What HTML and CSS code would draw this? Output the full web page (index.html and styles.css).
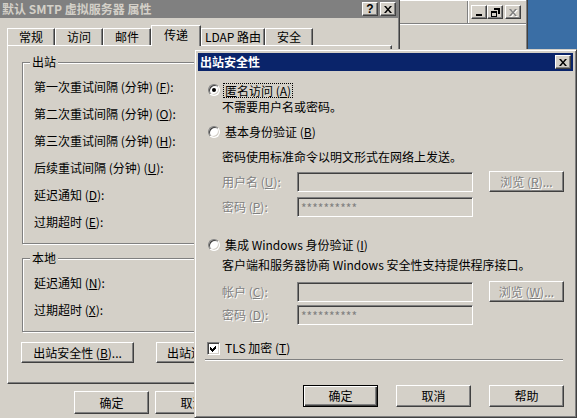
FILE: index.html
```html
<!DOCTYPE html>
<html lang="zh-CN">
<head>
  <meta charset="UTF-8">
  <title>出站安全性</title>
  <link rel="stylesheet" href="styles.css">
</head>
<body>
  <div class="screen">
    <div class="props">
      <div class="caption">
        <span class="caption-text">默认 SMTP 虚拟服务器 属性</span>
        <span class="cap-btns">
          <span class="cap-btn help">?</span>
          <span class="cap-btn">
            <svg width="8" height="7" viewBox="0 0 8 7"><path d="M0 0h2l2 2.5L6 0h2L5 3.5 8 7H6L4 4.5 2 7H0l3-3.5z"/></svg>
          </span>
        </span>
      </div>
      <div class="props-body">
        <div class="tabs">
          <span class="tab w48">常规</span>
          <span class="tab w48">访问</span>
          <span class="tab w48">邮件</span>
          <span class="tab active">传递</span>
          <span class="tab w64">LDAP 路由</span>
          <span class="tab w48">安全</span>
        </div>
        <div class="panel">
          <div class="group">
            <div class="group-title">出站</div>
            <div class="row">第一次重试间隔 (分钟) (<u>F</u>):</div>
            <div class="row">第二次重试间隔 (分钟) (<u>O</u>):</div>
            <div class="row">第三次重试间隔 (分钟) (<u>H</u>):</div>
            <div class="row">后续重试间隔 (分钟) (<u>U</u>):</div>
            <div class="row">延迟通知 (<u>D</u>):</div>
            <div class="row">过期超时 (<u>E</u>):</div>
          </div>
          <div class="group second">
            <div class="group-title">本地</div>
            <div class="row">延迟通知 (<u>N</u>):</div>
            <div class="row">过期超时 (<u>X</u>):</div>
          </div>
          <div class="panel-buttons">
            <span class="btn wide">出站安全性 (<u>B</u>)...</span>
            <!-- mostly hidden under the modal: only the start of the label shows -->
            <span class="btn wide peek">出站连接</span>
          </div>
        </div>
        <div class="sheet-buttons">
          <span class="btn">确定</span>
          <span class="btn">取消</span>
        </div>
      </div>
    </div>

    <div class="mmc">
      <div class="mmc-bar">
        <div class="mmc-menu"></div>
        <div class="mmc-btns">
          <span class="cap-btn">
            <svg width="8" height="7" viewBox="0 0 8 7"><rect x="1" y="5" width="6" height="2"/></svg>
          </span>
          <span class="cap-btn">
            <svg width="9" height="9" viewBox="0 0 9 9" shape-rendering="crispEdges"><path d="M3 0h6v6H7V2H3z M0 3h6v6H0z M1 5h4v3H1z" fill-rule="evenodd"/></svg>
          </span>
          <span class="cap-btn gap">
            <svg width="8" height="7" viewBox="0 0 8 7" class="dim"><path d="M0 0h2l2 2.5L6 0h2L5 3.5 8 7H6L4 4.5 2 7H0l3-3.5z"/></svg>
          </span>
        </div>
      </div>
    </div>

    <div class="desktop"></div>

    <div class="modal">
      <div class="m-caption">
        <span>出站安全性</span>
        <span class="cap-btn close">
          <svg width="8" height="7" viewBox="0 0 8 7"><path d="M0 0h2l2 2.5L6 0h2L5 3.5 8 7H6L4 4.5 2 7H0l3-3.5z"/></svg>
        </span>
      </div>
      <div class="m-body">
        <div class="opt opt1"><span class="radio on"></span><span class="focus">匿名访问 (<u>A</u>)</span></div>
        <div class="desc d1">不需要用户名或密码。</div>

        <div class="opt opt2"><span class="radio"></span><span class="opt-text">基本身份验证 (<u>B</u>)</span></div>
        <div class="desc d2">密码使用标准命令以明文形式在网络上发送。</div>
        <div class="field r1">
          <span class="field-label">用户名 (<u>U</u>):</span>
          <span class="edit"></span>
          <span class="btn disabled browse">浏览 (<u>R</u>)...</span>
        </div>
        <div class="field r2">
          <span class="field-label">密码 (<u>P</u>):</span>
          <span class="edit">**********</span>
        </div>

        <div class="opt opt3"><span class="radio"></span><span class="opt-text">集成 Windows 身份验证 (<u>I</u>)</span></div>
        <div class="desc d3">客户端和服务器协商 Windows 安全性支持提供程序接口。</div>
        <div class="field r3">
          <span class="field-label">帐户 (<u>C</u>):</span>
          <span class="edit"></span>
          <span class="btn disabled browse">浏览 (<u>W</u>)...</span>
        </div>
        <div class="field r4">
          <span class="field-label">密码 (<u>D</u>):</span>
          <span class="edit">**********</span>
        </div>

        <div class="opt tls">
          <span class="check">
            <svg width="7" height="7" viewBox="0 0 7 7" shape-rendering="crispEdges"><path d="M0 2l2 2 4-4v3L2 7 0 5z"/></svg>
          </span>
          <span class="opt-text">TLS 加密 (<u>T</u>)</span>
        </div>
        <div class="sep"></div>

        <div class="m-buttons">
          <span class="btn default">确定</span>
          <span class="btn">取消</span>
          <span class="btn">帮助</span>
        </div>
      </div>
    </div>
  </div>
</body>
</html>
```

FILE: styles.css
```css
body {
  margin: 0;
  background: #d4d0c8;
  font-family: "Noto Sans CJK SC", "Noto Sans", sans-serif;
  font-size: 12px;
  line-height: 14px;
  color: #000;
  overflow: hidden;
}
u {
  text-decoration: underline;
  text-underline-offset: 1px;
}
.screen {
  position: relative;
  width: 577px;
  height: 418px;
  display: flex;
  align-items: flex-start;
}

/* classic 3d bits */
.cap-btn {
  width: 16px;
  height: 14px;
  box-sizing: border-box;
  border: 1px solid;
  border-color: #fff #404040 #404040 #fff;
  box-shadow: inset -1px -1px #808080;
  background: #d4d0c8;
  display: flex;
  align-items: center;
  justify-content: center;
  color: #000;
}
.cap-btn svg {
  fill: #000;
}
.cap-btn .dim {
  fill: #808080;
  filter: drop-shadow(1px 1px 0 #fff);
}
.cap-btn.help {
  font-family: "Liberation Sans", sans-serif;
  font-weight: bold;
  font-size: 12px;
  line-height: 12px;
}
.btn {
  width: 75px;
  height: 23px;
  box-sizing: border-box;
  border: 1px solid;
  border-color: #fff #404040 #404040 #fff;
  box-shadow: inset -1px -1px #808080;
  background: #d4d0c8;
  display: flex;
  align-items: center;
  justify-content: center;
  white-space: nowrap;
  flex: none;
}
.btn.disabled {
  color: #808080;
  text-shadow: 1px 1px 0 #fff;
}
.btn.default {
  border-color: #000;
  box-shadow: inset 1px 1px #fff, inset -1px -1px #404040, inset -2px -2px #808080;
}

/* background property sheet */
.props {
  width: 400px;
  height: 418px;
  flex: none;
  box-sizing: border-box;
  border-right: 1px solid #404040;
  padding-right: 1px;
  box-shadow: inset -1px 0 #808080;
}
.caption {
  height: 18px;
  display: flex;
  align-items: center;
  justify-content: space-between;
  background: #808080;
  color: #d4d0c8;
  font-weight: bold;
  padding-left: 2px;
}
.cap-btns {
  display: flex;
  gap: 2px;
  margin-right: 2px;
}
.props-body {
  padding: 7px 0 0 7px;
}
.tabs {
  display: flex;
  align-items: flex-end;
  height: 20px;
}
.tab {
  height: 17px;
  box-sizing: border-box;
  border-top: 1px solid #fff;
  border-left: 1px solid #fff;
  border-right: 1px solid #404040;
  box-shadow: inset -1px 0 #808080;
  text-align: center;
  line-height: 16px;
  white-space: nowrap;
}
.w48 { width: 48px; }
.w64 { width: 64px; }
.tab.active {
  width: 50px;
  height: 21px;
  margin-bottom: -1px;
  position: relative;
  z-index: 1;
  background: #d4d0c8;
  line-height: 18px;
}
.panel {
  width: 385px;
  height: 339px;
  box-sizing: border-box;
  border: 1px solid;
  border-color: #fff #404040 #404040 #fff;
  box-shadow: inset -1px -1px #808080;
  padding: 16px 0 0 14px;
}
.group {
  width: 355px;
  border: 1px solid #808080;
  box-shadow: inset 1px 1px #fff, 1px 1px #fff;
  padding: 0 0 8px 11px;
}
.group.second {
  margin-top: 14px;
}
.group-title {
  display: table;
  margin: -8px 0 4px -4px;
  padding: 0 2px;
  background: #d4d0c8;
}
.row {
  height: 27px;
  line-height: 27px;
  white-space: nowrap;
}
.panel-buttons {
  display: flex;
  gap: 22px;
  margin: 10px 0 0 -1px;
}
.btn.wide {
  width: 113px;
  height: 21px;
}
.btn.peek {
  justify-content: flex-start;
  padding-left: 10px;
}
.sheet-buttons {
  display: flex;
  gap: 6px;
  margin: 7px 0 0 67px;
}

/* mmc window behind */
.mmc {
  width: 128px;
  height: 50px;
  flex: none;
  box-sizing: border-box;
  border-right: 1px solid #404040;
  padding-right: 1px;
  box-shadow: inset -1px 0 #808080;
}
.mmc-bar {
  height: 24px;
  display: flex;
  box-sizing: border-box;
  border-top: 1px solid #fff;
  border-bottom: 1px solid #808080;
  box-shadow: 0 1px #fff;
}
.mmc-menu {
  width: 67px;
  border-right: 1px solid #808080;
  box-shadow: 1px 0 #fff;
}
.mmc-btns {
  display: flex;
  padding: 4px 0 0 3px;
}
.mmc-btns .gap {
  margin-left: 2px;
}
.desktop {
  flex: 1;
  height: 50px;
  background: #3a6ea5;
}

/* modal dialog */
.modal {
  position: absolute;
  left: 194px;
  top: 49px;
  width: 383px;
  height: 369px;
  box-sizing: border-box;
  border: 1px solid;
  border-color: #d4d0c8 #404040 #404040 #d4d0c8;
  box-shadow: inset 1px 1px #fff, inset -1px -1px #808080;
  padding: 3px;
  background: #d4d0c8;
  z-index: 5;
}
.m-caption {
  height: 18px;
  display: flex;
  align-items: center;
  justify-content: space-between;
  background: #0a246a;
  color: #fff;
  font-weight: bold;
  padding-left: 2px;
}
.m-caption .close {
  margin-right: 2px;
}
.opt {
  display: flex;
  align-items: center;
  height: 16px;
  margin-left: 10px;
  white-space: nowrap;
}
.radio {
  width: 12px;
  height: 12px;
  box-sizing: border-box;
  border-radius: 50%;
  border: 1px solid;
  border-color: #808080 #fff #fff #808080;
  box-shadow: inset 1px 1px #404040, inset -1px -1px #d4d0c8;
  background: #fff;
  display: flex;
  align-items: center;
  justify-content: center;
  flex: none;
}
.radio.on::after {
  content: "";
  width: 4px;
  height: 4px;
  border-radius: 50%;
  background: #000;
}
.opt-text {
  margin-left: 5px;
}
.focus {
  margin-left: 3px;
  padding: 0 1px;
  border: 1px dotted #000;
  line-height: 13px;
}
.check {
  width: 13px;
  height: 13px;
  box-sizing: border-box;
  border: 1px solid;
  border-color: #808080 #fff #fff #808080;
  box-shadow: inset 1px 1px #404040, inset -1px -1px #d4d0c8;
  background: #fff;
  display: flex;
  align-items: center;
  justify-content: center;
  flex: none;
}
.tls {
  margin: 15px 0 0 9px;
}
.desc {
  height: 14px;
  margin-left: 24px;
  white-space: nowrap;
}
.opt1 { margin-top: 11px; }
.d1 { margin-top: 2px; }
.opt2 { margin-top: 10px; }
.d2 { margin-top: 10px; }
.opt3 { margin-top: 20px; }
.d3 { margin-top: 5px; }
.field {
  display: flex;
  align-items: center;
  height: 21px;
  padding-left: 24px;
}
.r1 { margin-top: 7px; }
.r2 { margin-top: 4px; }
.r3 { margin-top: 9px; }
.r4 { margin-top: 2px; }
.field-label {
  width: 75px;
  flex: none;
  color: #808080;
  text-shadow: 1px 1px 0 #fff;
  white-space: nowrap;
}
.edit {
  width: 176px;
  height: 20px;
  box-sizing: border-box;
  border: 1px solid;
  border-color: #808080 #fff #fff #808080;
  box-shadow: inset 1px 1px #404040, inset -1px -1px #d4d0c8;
  background: #d4d0c8;
  color: #808080;
  padding: 2px 3px 0;
  line-height: 16px;
  flex: none;
}
.browse {
  margin-left: 16px;
  height: 21px;
}
.sep {
  margin: 3px 10px 0 7px;
  border-top: 1px solid #808080;
  border-bottom: 1px solid #fff;
}
.m-buttons {
  display: flex;
  justify-content: flex-end;
  gap: 18px;
  padding-right: 9px;
  margin-top: 24px;
}
.m-buttons .btn {
  height: 22px;
}
```
